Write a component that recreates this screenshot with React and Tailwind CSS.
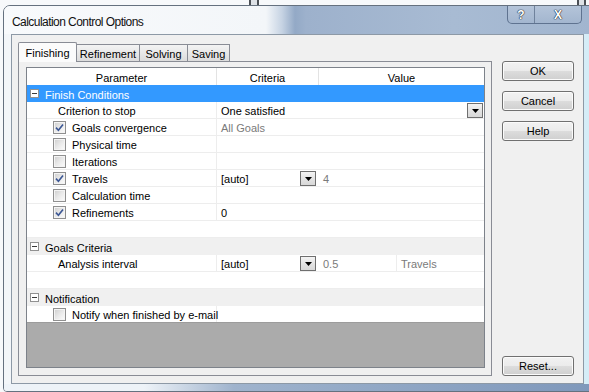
import React from 'react';

const font = "font-['Liberation_Sans',Arial,sans-serif]";

function MinusBox() {
  return (
    <div className="w-[9px] h-[9px] shrink-0 border border-[#919191] bg-white flex items-center justify-center">
      <div className="w-[5px] h-px bg-[#3a3a3a]" />
    </div>
  );
}

function CheckBox({ checked }) {
  return (
    <div className="w-[13px] h-[13px] shrink-0 border border-[#8f8f8f] bg-[#f4f4f4] p-px">
      <div className="w-full h-full bg-[linear-gradient(135deg,#d2d2d2_0%,#e9e9e9_50%,#f9f9f9_100%)] flex items-center justify-center">
        {checked && (
          <svg width="9" height="9" viewBox="0 0 9 9">
            <path d="M1 4.6 L3.4 7.2 L8 1.4" fill="none" stroke="#3c5794" strokeWidth="1.6" />
          </svg>
        )}
      </div>
    </div>
  );
}

function DropBtn() {
  return (
    <div className="w-[16px] h-[15px] shrink-0 self-center border border-[#6f6f6f] bg-[linear-gradient(#f4f4f4,#e4e4e4_50%,#d8d8d8)] flex items-center justify-center pt-[2px]">
      <svg width="7" height="4" viewBox="0 0 7 4">
        <path d="M0 0 H7 L3.5 4 Z" fill="#000" />
      </svg>
    </div>
  );
}

function Btn({ children }) {
  return (
    <div className="h-[20px] w-[72px] rounded-[3px] border border-[#707070] bg-[linear-gradient(#f2f2f2_0%,#ebebeb_50%,#dddddd_50%,#cfcfcf_100%)] shadow-[inset_0_0_0_1px_#fbfbfb] flex items-center justify-center pt-[1px]">
      {children}
    </div>
  );
}

function Section({ label, active }) {
  return (
    <div
      className={`h-[17px] shrink-0 flex items-center pl-[3px] gap-[6px] ${
        active ? 'bg-[#3399ff] text-white' : 'bg-[#f0f0f0]'
      }`}
    >
      <MinusBox />
      <span className="pt-[3px]">{label}</span>
    </div>
  );
}

function Row({ left, right, sep = true }) {
  return (
    <div className="h-[17px] shrink-0 flex bg-white border-b border-[#ededed]">
      <div className={`w-[190px] shrink-0 flex items-center ${sep ? 'border-r border-[#ededed]' : ''}`}>{left}</div>
      <div className="flex-1 flex items-stretch">{right}</div>
    </div>
  );
}

function Check({ checked, label }) {
  return (
    <div className="pl-[26px] flex items-center gap-[6px]">
      <CheckBox checked={checked} />
      <span className="pt-[3px]">{label}</span>
    </div>
  );
}

const Txt = ({ children, gray }) => (
  <span className={`pl-[4px] pt-[3px] flex items-center ${gray ? 'text-[#7a7a7a]' : ''}`}>{children}</span>
);

const tabIdle =
  'h-[17px] border-t border-r border-[#898c95] bg-[linear-gradient(#f3f3f3,#e8e8e8_50%,#dcdcdc)] flex items-center justify-center pt-[2px]';

export default function App() {
  return (
    <div className={`w-[589px] h-[392px] overflow-hidden bg-[#f7f9fb] ${font} text-[11px] leading-none text-black whitespace-nowrap`}>
      {/* windows behind */}
      <div className="h-[5px] flex">
        <div className="w-[249px]" />
        <div className="w-[2px] bg-[#4b4f55]" />
        <div className="w-[6px] bg-[#dde1e6]" />
        <div className="w-[2px] bg-[#4b4f55]" />
        <div className="w-[318px]" />
        <div className="w-[2px] bg-[#4b4f55]" />
        <div className="w-[5px] bg-[#dde1e6]" />
        <div className="w-[2px] bg-[#4b4f55]" />
      </div>

      {/* dialog window */}
      <div className="ml-[3px] w-[590px] h-[387px] border border-[#65717f] rounded-tl-[7px] rounded-bl-[4px] overflow-hidden flex flex-col bg-[linear-gradient(90deg,#f3f6f9_0%,#eef3f8_85%,#d3ecf7_100%)]">
        {/* title bar */}
        <div className="h-[28px] shrink-0 flex items-center pl-[8px] bg-[linear-gradient(90deg,#f8fafc_0px,#f3f6f9_262px,#c6d3e3_278px,#93a9c6_291px,#9db1cc_302px,#a8bbd3_450px,#a1b5cf_100%)]">
          <span className="pt-[3px] text-[12px] tracking-[-0.55px] text-[#111]">Calculation Control Options</span>
          <div className="ml-auto mr-[10px] self-start flex h-[18px] border border-t-0 border-[#5f7390] rounded-b-[5px] bg-[linear-gradient(#b4c4d9,#a3b6cf)] overflow-hidden">
            <div className="w-[27px] border-r border-[#6f829c] flex items-center justify-center text-white font-bold text-[12px] [text-shadow:0_0_1px_#1f2a3a,0_0_1px_#1f2a3a,0_0_1px_#1f2a3a]">
              ?
            </div>
            <div className="w-[46px] flex items-center justify-center text-white font-bold text-[12px] [text-shadow:0_0_1px_#1f2a3a,0_0_1px_#1f2a3a,0_0_1px_#1f2a3a]">
              X
            </div>
          </div>
        </div>

        {/* client area */}
        <div className="ml-[7px] w-[573px] h-[350px] shrink-0 border border-[#8d99a6] bg-[#f0f0f0] flex gap-[10px] pl-[6px]">
          {/* tabs + page */}
          <div className="w-[474px] flex flex-col">
            <div className="h-[26px] shrink-0 flex items-end">
              <div className="relative z-10 -mb-px h-[20px] w-[59px] border border-b-0 border-[#898c95] rounded-t-[2px] bg-[#fbfbfb] flex items-center justify-center pt-[1px]">
                Finishing
              </div>
              <div className={`w-[63px] ${tabIdle}`}>Refinement</div>
              <div className={`w-[48px] ${tabIdle}`}>Solving</div>
              <div className={`w-[42px] ${tabIdle}`}>Saving</div>
            </div>

            <div className="h-[315px] shrink-0 border border-[#898c95] bg-[#f0f0f0] pl-[7px] pt-[5px]">
              {/* property grid */}
              <div className="w-[459px] h-[301px] border border-[#7d828a] bg-[#ababab] flex flex-col overflow-hidden">
                <div className="h-[17px] shrink-0 flex bg-white">
                  <div className="w-[190px] border-r border-[#e3e3e3] flex items-center justify-center pt-[3px]">Parameter</div>
                  <div className="w-[102px] border-r border-[#e3e3e3] flex items-center justify-center pt-[3px]">Criteria</div>
                  <div className="flex-1 flex items-center justify-center pt-[3px]">Value</div>
                </div>

                <Section label="Finish Conditions" active />
                <Row
                  left={<span className="pl-[31px] pt-[3px]">Criterion to stop</span>}
                  right={
                    <>
                      <span className="flex-1 pl-[4px] pt-[3px] flex items-center">One satisfied</span>
                      <div className="mr-px flex">
                        <DropBtn />
                      </div>
                    </>
                  }
                />
                <Row left={<Check checked label="Goals convergence" />} right={<Txt gray>All Goals</Txt>} />
                <Row left={<Check label="Physical time" />} />
                <Row left={<Check label="Iterations" />} />
                <Row
                  left={<Check checked label="Travels" />}
                  right={
                    <>
                      <span className="w-[83px] pl-[4px] pt-[3px] flex items-center">[auto]</span>
                      <DropBtn />
                      <span className="pl-[7px] pt-[3px] flex items-center text-[#7a7a7a]">4</span>
                    </>
                  }
                />
                <Row left={<Check label="Calculation time" />} />
                <Row left={<Check checked label="Refinements" />} right={<Txt>0</Txt>} />
                <Row sep={false} />

                <Section label="Goals Criteria" />
                <Row
                  left={<span className="pl-[31px] pt-[3px]">Analysis interval</span>}
                  right={
                    <>
                      <span className="w-[83px] pl-[4px] pt-[3px] flex items-center">[auto]</span>
                      <DropBtn />
                      <span className="w-[81px] pl-[7px] pt-[3px] border-r border-[#ededed] flex items-center text-[#7a7a7a]">0.5</span>
                      <span className="pl-[4px] pt-[3px] flex items-center text-[#7a7a7a]">Travels</span>
                    </>
                  }
                />
                <Row sep={false} />

                <Section label="Notification" />
                <div className="h-[17px] shrink-0 flex bg-white border-b border-[#9c9c9c]">
                  <div className="w-[190px] shrink-0 flex items-center border-r border-[#ededed]">
                    <Check label="Notify when finished by e-mail" />
                  </div>
                </div>
              </div>
            </div>
          </div>

          {/* buttons */}
          <div className="w-[72px] pt-[26px] h-[341px] flex flex-col justify-between">
            <div className="flex flex-col gap-[10px]">
              <Btn>OK</Btn>
              <Btn>Cancel</Btn>
              <Btn>Help</Btn>
            </div>
            <Btn>Reset...</Btn>
          </div>
        </div>

        {/* bottom frame */}
        <div className="flex-1 bg-[linear-gradient(90deg,#eef3f8_0px,#eef3f8_140px,#9fb3cd_230px,#7f98bb_100%)]" />
      </div>
    </div>
  );
}
